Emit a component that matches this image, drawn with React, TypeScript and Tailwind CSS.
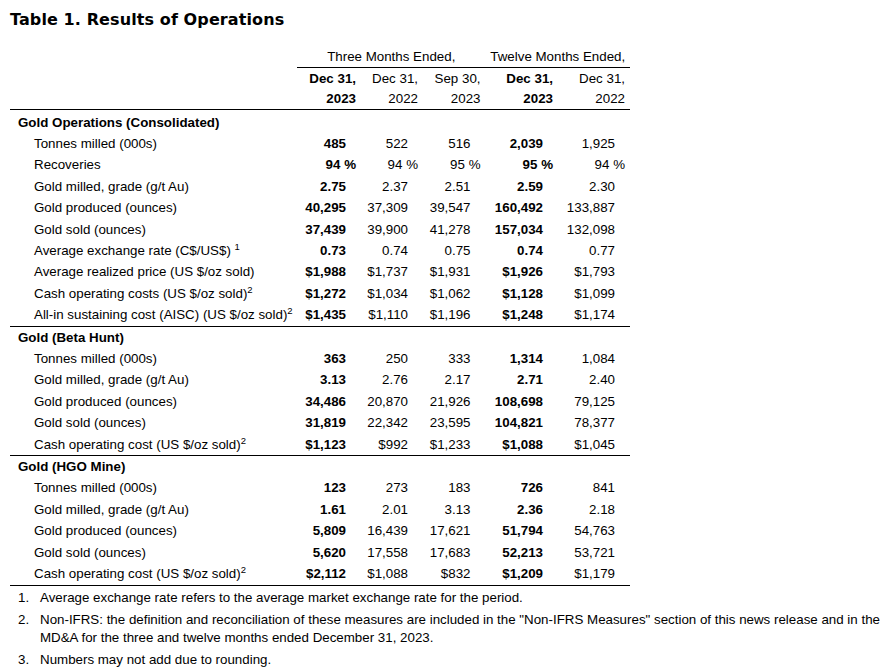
import React from 'react';

type Row = { label: React.ReactNode; vals: string[]; pct?: boolean };
type Section = { title: string; rows: Row[] };

const Sup = ({ n }: { n: string }) => (
  <span className="relative top-[-5px] text-[9.5px] leading-none">{n}</span>
);

const SECTIONS: Section[] = [
  {
    title: 'Gold Operations (Consolidated)',
    rows: [
      { label: 'Tonnes milled (000s)', vals: ['485', '522', '516', '2,039', '1,925'] },
      { label: 'Recoveries', vals: ['94 %', '94 %', '95 %', '95 %', '94 %'], pct: true },
      { label: 'Gold milled, grade (g/t Au)', vals: ['2.75', '2.37', '2.51', '2.59', '2.30'] },
      { label: 'Gold produced (ounces)', vals: ['40,295', '37,309', '39,547', '160,492', '133,887'] },
      { label: 'Gold sold (ounces)', vals: ['37,439', '39,900', '41,278', '157,034', '132,098'] },
      {
        label: (
          <>
            Average exchange rate (C$/US$) <Sup n="1" />
          </>
        ),
        vals: ['0.73', '0.74', '0.75', '0.74', '0.77'],
      },
      { label: 'Average realized price (US $/oz sold)', vals: ['$1,988', '$1,737', '$1,931', '$1,926', '$1,793'] },
      {
        label: (
          <>
            Cash operating costs (US $/oz sold)
            <Sup n="2" />
          </>
        ),
        vals: ['$1,272', '$1,034', '$1,062', '$1,128', '$1,099'],
      },
      {
        label: (
          <>
            All-in sustaining cost (AISC) (US $/oz sold)
            <Sup n="2" />
          </>
        ),
        vals: ['$1,435', '$1,110', '$1,196', '$1,248', '$1,174'],
      },
    ],
  },
  {
    title: 'Gold (Beta Hunt)',
    rows: [
      { label: 'Tonnes milled (000s)', vals: ['363', '250', '333', '1,314', '1,084'] },
      { label: 'Gold milled, grade (g/t Au)', vals: ['3.13', '2.76', '2.17', '2.71', '2.40'] },
      { label: 'Gold produced (ounces)', vals: ['34,486', '20,870', '21,926', '108,698', '79,125'] },
      { label: 'Gold sold (ounces)', vals: ['31,819', '22,342', '23,595', '104,821', '78,377'] },
      {
        label: (
          <>
            Cash operating cost (US $/oz sold)
            <Sup n="2" />
          </>
        ),
        vals: ['$1,123', '$992', '$1,233', '$1,088', '$1,045'],
      },
    ],
  },
  {
    title: 'Gold (HGO Mine)',
    rows: [
      { label: 'Tonnes milled (000s)', vals: ['123', '273', '183', '726', '841'] },
      { label: 'Gold milled, grade (g/t Au)', vals: ['1.61', '2.01', '3.13', '2.36', '2.18'] },
      { label: 'Gold produced (ounces)', vals: ['5,809', '16,439', '17,621', '51,794', '54,763'] },
      { label: 'Gold sold (ounces)', vals: ['5,620', '17,558', '17,683', '52,213', '53,721'] },
      {
        label: (
          <>
            Cash operating cost (US $/oz sold)
            <Sup n="2" />
          </>
        ),
        vals: ['$2,112', '$1,088', '$832', '$1,209', '$1,179'],
      },
    ],
  },
];

const HEADS = [
  ['Dec 31,', '2023'],
  ['Dec 31,', '2022'],
  ['Sep 30,', '2023'],
  ['Dec 31,', '2023'],
  ['Dec 31,', '2022'],
];

const FOOTNOTES: string[] = [
  'Average exchange rate refers to the average market exchange rate for the period.',
  'Non-IFRS: the definition and reconciliation of these measures are included in the "Non-IFRS Measures" section of this news release and in the MD&A for the three and twelve months ended December 31, 2023.',
  'Numbers may not add due to rounding.',
];

const GRID = 'grid grid-cols-[287px_64px_62px_62.5px_72.5px_72px]';

const App: React.FC = () => {
  return (
    <div className="min-h-screen bg-white pl-[10px] pt-[10px] text-black font-['Liberation_Sans',Arial,sans-serif] text-[13.33px]">
      <h1 className="mb-[16px] font-['DejaVu_Sans',Verdana,sans-serif] text-[16px] font-bold leading-[20px] tracking-[0.1px]">
        Table 1. Results of Operations
      </h1>

      <div className="w-[620px]">
        {/* Period header */}
        <div className={`${GRID} h-[22px] items-center`}>
          <div />
          <div className="col-span-3 border-b border-black text-center leading-[21px]">Three Months Ended,</div>
          <div className="col-span-2 border-b border-black text-center leading-[21px]">Twelve Months Ended,</div>
        </div>
        <div className={`${GRID} border-b border-black pt-[1px] leading-[20px]`}>
          <div />
          {HEADS.map((h, i) => (
            <div key={i} className={`pr-[5px] text-right ${i === 0 || i === 3 ? 'font-bold' : ''}`}>
              <div>{h[0]}</div>
              <div>{h[1]}</div>
            </div>
          ))}
        </div>

        {SECTIONS.map((sec, si) => (
          <div key={sec.title} className={`border-b border-black ${si === 0 ? 'pt-[2px]' : ''}`}>
            <div className="flex h-[21.4px] items-center pl-[8px] font-bold">{sec.title}</div>
            {sec.rows.map((r, ri) => (
              <div key={ri} className={`${GRID} h-[21.4px] items-center`}>
                <div className="whitespace-nowrap pl-[24px]">{r.label}</div>
                {r.vals.map((v, vi) => (
                  <div
                    key={vi}
                    className={`text-right ${r.pct ? 'pr-[5px]' : 'pr-[15px]'} ${vi === 0 || vi === 3 ? 'font-bold' : ''}`}
                  >
                    {v}
                  </div>
                ))}
              </div>
            ))}
          </div>
        ))}
      </div>

      <ol className="pt-[3px] pr-[4px]">
        {FOOTNOTES.map((f, i) => (
          <li key={i} className="mb-[4px] flex leading-[18px]">
            <span className="w-[30px] shrink-0 pl-[8px]">{i + 1}.</span>
            <span>{f}</span>
          </li>
        ))}
      </ol>
    </div>
  );
};

export default App;
